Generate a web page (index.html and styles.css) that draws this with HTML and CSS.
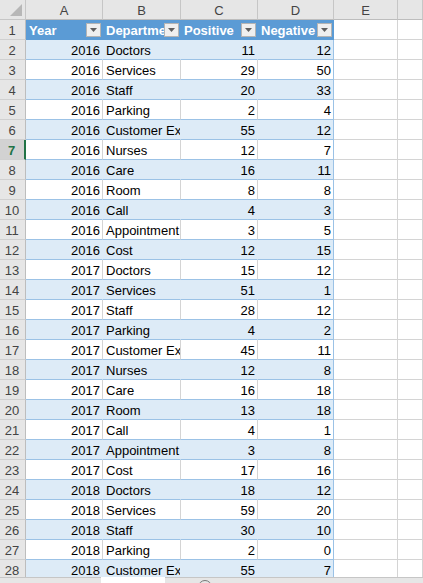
FILE: index.html
```html
<!DOCTYPE html>
<html>
<head>
<meta charset="utf-8">
<link rel="stylesheet" href="styles.css">
</head>
<body>
<div class="window">
  <div class="sheet" id="sheet">
    <div class="corner"><svg width="26" height="20" viewBox="0 0 26 20"><polygon points="10,16 22,16 22,4" fill="#b7b7b7"/></svg></div>
    <div class="colhead">A</div>
    <div class="colhead">B</div>
    <div class="colhead">C</div>
    <div class="colhead">D</div>
    <div class="colhead">E</div>
    <div class="colhead"></div>
  </div>
  <div class="tabbar">
    <div class="tab"></div>
    <div class="addsheet"></div>
  </div>
</div>
<script src="script.js"></script>
</body>
</html>
```

FILE: script.js
```js
const data = [
  [2016,"Doctors",11,12],[2016,"Services",29,50],[2016,"Staff",20,33],[2016,"Parking",2,4],
  [2016,"Customer Experience",55,12],[2016,"Nurses",12,7],[2016,"Care",16,11],[2016,"Room",8,8],
  [2016,"Call",4,3],[2016,"Appointment",3,5],[2016,"Cost",12,15],
  [2017,"Doctors",15,12],[2017,"Services",51,1],[2017,"Staff",28,12],[2017,"Parking",4,2],
  [2017,"Customer Experience",45,11],[2017,"Nurses",12,8],[2017,"Care",16,18],[2017,"Room",13,18],
  [2017,"Call",4,1],[2017,"Appointment",3,8],[2017,"Cost",17,16],
  [2018,"Doctors",18,12],[2018,"Services",59,20],[2018,"Staff",30,10],[2018,"Parking",2,0],
  [2018,"Customer Experience",55,7]
];
const sheet = document.getElementById('sheet');
function cell(cls, text, html) {
  const d = document.createElement('div');
  d.className = cls;
  if (html) d.innerHTML = html; else d.textContent = text;
  sheet.appendChild(d);
}
const btn = '<span class="filter"><svg width="7" height="4" viewBox="0 0 7 4"><polygon points="0,0 7,0 3.5,4" fill="#5f5f5f"/></svg></span>';
cell('rowhead', '1');
['Year','Department','Positive','Negative'].forEach((h, i) => {
  cell('th' + (i === 3 ? ' last' : ''), '', '<span class="thtext">' + h + '</span>' + btn);
});
cell('blank', '');
cell('blank', '');
data.forEach((r, idx) => {
  const rowNum = idx + 2;
  const band = rowNum % 2 === 0 ? ' band' : '';
  cell('rowhead' + (rowNum === 7 ? ' selected' : ''), String(rowNum));
  cell('td num' + band, String(r[0]));
  cell('td txt' + band, r[1]);
  cell('td num' + band, String(r[2]));
  cell('td num last' + band, String(r[3]));
  cell('blank', '');
  cell('blank', '');
});
```

FILE: styles.css
```css
* { box-sizing: border-box; }
html, body { margin: 0; padding: 0; background: #ffffff; }
body {
  font-family: "Liberation Sans", Arial, sans-serif;
  font-size: 13px;
  color: #000;
  width: 423px;
  height: 583px;
  overflow: hidden;
}
.window {
  display: flex;
  flex-direction: column;
  height: 583px;
}
.sheet {
  flex: 1;
  overflow: hidden;
  display: grid;
  grid-template-columns: 26px 77px 78px 77px 76px 64px 1fr;
  grid-auto-rows: 20px;
  align-content: start;
}
.corner {
  background: #e6e6e6;
  border-right: 1px solid #c6c6c6;
  border-bottom: 1px solid #c6c6c6;
}
.corner svg { display: block; }
.colhead {
  background: #e6e6e6;
  border-right: 1px solid #c6c6c6;
  border-bottom: 1px solid #bdbdbd;
  color: #444;
  text-align: center;
  line-height: 19px;
  padding-top: 1px;
}
.rowhead {
  background: #e6e6e6;
  border-right: 1px solid #bdbdbd;
  border-bottom: 1px solid #d0d0d0;
  color: #444;
  text-align: center;
  line-height: 19px;
  padding-top: 1px;
  padding-right: 1px;
}
.rowhead.selected {
  background: #d2d2d2;
  color: #217346;
  font-weight: bold;
  border-right: 2px solid #217346;
}
.th {
  position: relative;
  background: #5b9bd5;
  border-bottom: 1px solid #5b9bd5;
  color: #fff;
  font-weight: bold;
  line-height: 19px;
  padding-top: 1px;
  padding-left: 3px;
  white-space: nowrap;
  overflow: hidden;
}
.filter {
  position: absolute;
  right: 2px;
  top: 3px;
  width: 15px;
  height: 14px;
  background: #efefef;
  border: 1px solid #b4b4b4;
  display: flex;
  align-items: center;
  justify-content: center;
}
.filter svg { display: block; }
.td {
  border-right: 1px solid #d4d4d4;
  border-bottom: 1px solid #9bc2e6;
  line-height: 19px;
  padding-top: 1px;
  white-space: nowrap;
  overflow: hidden;
  background: #fff;
}
.td.band {
  background: #ddebf7;
  border-right-color: #ddebf7;
}
.td.last, .td.band.last { border-right-color: #9bc2e6; }
.td.num { text-align: right; padding-right: 2px; }
.td.txt { padding-left: 3px; text-overflow: clip; }
.blank {
  border-right: 1px solid #d4d4d4;
  border-bottom: 1px solid #d4d4d4;
}
.tabbar {
  height: 6px;
  flex: none;
  background: #e6e6e6;
  border-top: 1px solid #c6c6c6;
  position: relative;
  display: flex;
  align-items: flex-start;
}
.tab {
  margin-left: 101px;
  width: 64px;
  height: 6px;
  margin-top: -1px;
  background: #fff;
}
.addsheet {
  margin-left: 33px;
  margin-top: 2px;
  width: 14px;
  height: 14px;
  border: 1px solid #777;
  border-radius: 50%;
}
```
